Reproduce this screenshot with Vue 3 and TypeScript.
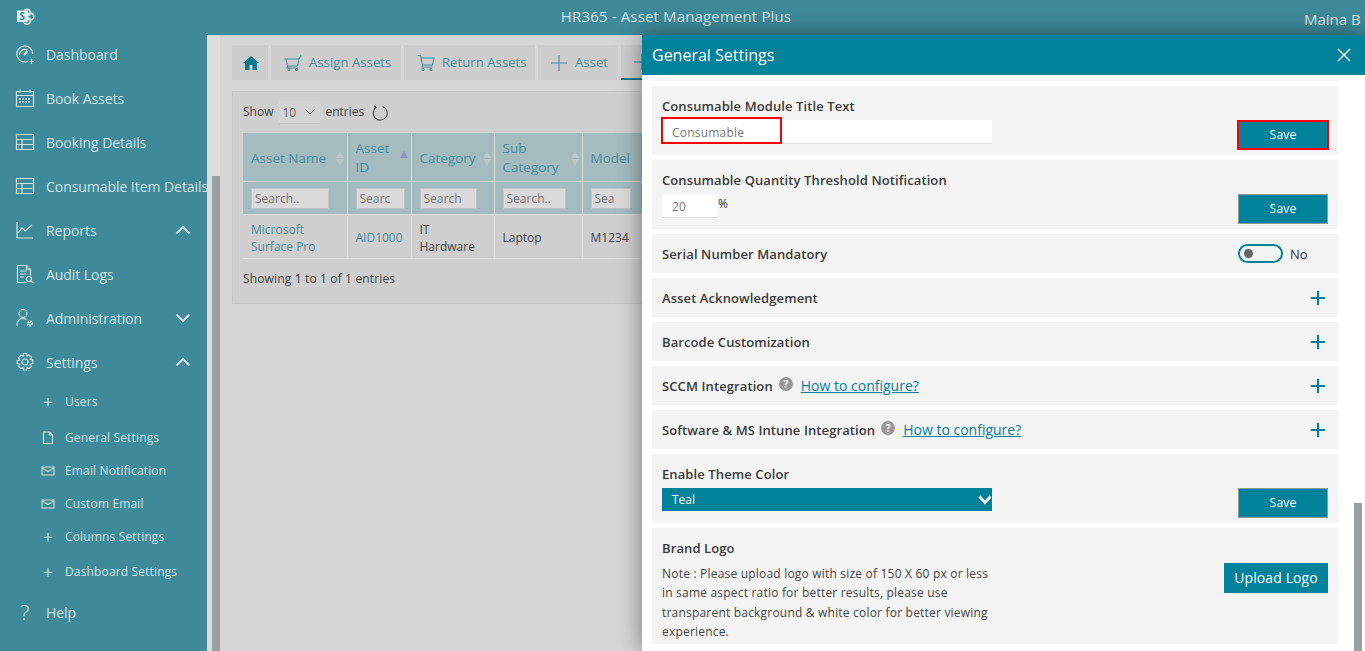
<script setup lang="ts">
interface NavItem {
  label: string
  icon: string
  chevron?: 'up' | 'down'
}

const navTop: NavItem[] = [
  { label: 'Dashboard', icon: 'gauge' },
  { label: 'Book Assets', icon: 'calendar' },
  { label: 'Booking Details', icon: 'table' },
  { label: 'Consumable Item Details', icon: 'table' },
  { label: 'Reports', icon: 'chart', chevron: 'up' },
  { label: 'Audit Logs', icon: 'audit' },
  { label: 'Administration', icon: 'admin', chevron: 'down' },
  { label: 'Settings', icon: 'gear', chevron: 'up' },
]

const navSub = [
  { label: 'Users', icon: 'plus' },
  { label: 'General Settings', icon: 'doc' },
  { label: 'Email Notification', icon: 'mail' },
  { label: 'Custom Email', icon: 'mail' },
  { label: 'Columns Settings', icon: 'plus' },
  { label: 'Dashboard Settings', icon: 'plus' },
]

const columns = [
  { title: 'Asset Name', width: 104, holder: 'Search..', input: 78 },
  { title: 'Asset ID', width: 64, holder: 'Searc', input: 49 },
  { title: 'Category', width: 83, holder: 'Search', input: 57 },
  { title: 'Sub Category', width: 88, holder: 'Search..', input: 63 },
  { title: 'Model', width: 80, holder: 'Sea', input: 40 },
]

const accordions = [
  { label: 'Asset Acknowledgement' },
  { label: 'Barcode Customization' },
  { label: 'SCCM Integration', help: true },
  { label: 'Software & MS Intune Integration', help: true },
]
</script>

<template>
  <div class="page">
    <header class="topbar">
      <svg class="logo" width="18" height="17" viewBox="0 0 18 17">
        <circle cx="10" cy="4.500" r="3.300" fill="none" stroke="#e4eef0" stroke-width="1.400" />
        <circle cx="13.500" cy="8.500" r="3.300" fill="none" stroke="#e4eef0" stroke-width="1.400" />
        <circle cx="10" cy="12.800" r="3.300" fill="none" stroke="#e4eef0" stroke-width="1.400" />
        <rect x="0" y="2.500" width="11" height="11.500" fill="#e4eef0" />
        <text x="2.500" y="12" font-size="10" font-weight="700" fill="#3e8a99">S</text>
      </svg>
      <span class="app-title">HR365 - Asset Management Plus</span>
      <span class="user">Maina B</span>
    </header>

    <div class="body">
      <nav class="sidebar">
        <a v-for="item in navTop" :key="item.label" class="nav-row">
          <svg class="nav-icon" width="20" height="20" viewBox="0 0 20 20" fill="none" stroke="currentColor" stroke-width="1.2">
            <template v-if="item.icon === 'gauge'">
              <path d="M13 17.300A8 8 0 1 1 17.800 10" />
              <path d="M4.500 11a5.500 5.500 0 0 1 8-5" />
              <path d="M9 11l3.500-4" stroke-width="2" />
              <path d="M14 17.500h5M16.500 15v5" />
            </template>
            <template v-else-if="item.icon === 'calendar'">
              <path d="M1.500 3.500h17v15h-17zM1.500 7.500h17M5 1.500v3M15 1.500v3" />
              <path d="M5 10v6M8 10v6M11 10v6M14 10v6" stroke-dasharray="2 1" />
            </template>
            <template v-else-if="item.icon === 'table'">
              <path d="M1.500 2.500h17v15h-17zM1.500 7.500h17M1.500 12.500h17M7 7.500v10" />
            </template>
            <template v-else-if="item.icon === 'chart'">
              <path d="M2 2v16h16M3 13l4-5 3 3 7-6" />
            </template>
            <template v-else-if="item.icon === 'audit'">
              <path d="M2.500 1.500h9l4 4v6M11.500 1.500v4h4M2.500 1.500v17h9" />
              <path d="M5 7h7M5 10h6M5 13h4" />
              <circle cx="14" cy="15" r="2.500" />
              <path d="M16 17l2.500 2" />
            </template>
            <template v-else-if="item.icon === 'admin'">
              <circle cx="8" cy="5.500" r="4" />
              <path d="M2 18c0-5 2.500-7.500 6-7.500 1.500 0 2.500.4 3.500 1" />
              <circle cx="15" cy="15.500" r="2" stroke-width="2.200" stroke-dasharray="1.500 .6" />
            </template>
            <template v-else>
              <circle cx="10" cy="10" r="3" />
              <path d="M8.500 1.500h3l.5 2.500 2-1 2.500 2.300-1.200 2 2.500.8v3.400l-2.500.8 1.200 2-2.500 2.300-2-1-.5 2.400h-3l-.5-2.400-2 1-2.500-2.300 1.200-2-2.500-.8V8.600l2.500-.8-1.200-2L6 3l2 1z" />
            </template>
          </svg>
          <span class="nav-label">{{ item.label }}</span>
          <svg v-if="item.chevron" class="chevron" width="16" height="10" viewBox="0 0 16 10" fill="none" stroke="currentColor" stroke-width="2.200">
            <path :d="item.chevron === 'up' ? 'M1.500 8.500 8 2l6.500 6.500' : 'M1.500 1.500 8 8l6.500-6.500'" />
          </svg>
        </a>

        <div class="sub-list">
          <a v-for="sub in navSub" :key="sub.label" class="sub-row">
            <svg class="sub-icon" width="14" height="14" viewBox="0 0 14 14" fill="none" stroke="currentColor" stroke-width="1.100">
              <path v-if="sub.icon === 'plus'" d="M7 3v8.500M2.800 7.200h8.500" />
              <path v-else-if="sub.icon === 'doc'" d="M2.500 1h6l3 3v8.500h-9zM8.500 1v3h3M9 12.500h3" />
              <path v-else d="M1 3h12v8H1zM1 4l6 3.500L13 4" />
            </svg>
            <span>{{ sub.label }}</span>
          </a>
        </div>

        <a class="nav-row help-row">
          <span class="help-glyph">?</span>
          <span class="nav-label">Help</span>
        </a>
      </nav>

      <div class="scroll-gutter"><div class="scroll-thumb"></div></div>

      <main class="content">
        <div class="tabs">
          <a class="tab home">
            <svg width="16" height="14" viewBox="0 0 16 14"><path d="M8 0 0 7h2v7h4.500V9h3v5H14V7h2z" fill="#14788c" /></svg>
          </a>
          <a class="tab assign">
            <svg width="18" height="16" viewBox="0 0 18 16" fill="none" stroke="currentColor" stroke-width="1.100"><path d="M.5 4h14.500l2-3.500M2 4l1.500 7h10L15 4M3.500 11l-.5 2h11" /><circle cx="5" cy="14.500" r="1" /><circle cx="12.500" cy="14.500" r="1" /></svg>
            Assign Assets
          </a>
          <a class="tab ret">
            <svg width="18" height="16" viewBox="0 0 18 16" fill="none" stroke="currentColor" stroke-width="1.100"><path d="M.5.500h3l2 9.500h10L17 3H4M5.500 10l-.5 2h10.500" /><circle cx="6" cy="14.500" r="1" /><circle cx="14" cy="14.500" r="1" /></svg>
            Return Assets
          </a>
          <a class="tab asset">
            <svg width="16" height="16" viewBox="0 0 16 16" fill="none" stroke="currentColor" stroke-width="1.100"><path d="M8 0v16M0 8h16" /></svg>
            Asset
          </a>
          <a class="tab active">
            <svg width="16" height="16" viewBox="0 0 16 16" fill="none" stroke="currentColor" stroke-width="1.100"><path d="M8 0v16M0 8h16" /></svg>
          </a>
        </div>

        <section class="grid-card">
          <div class="length">
            <span class="length-text">Show</span>
            <span class="length-select">10<svg width="10" height="6" viewBox="0 0 10 6" fill="none" stroke="#8a8a8a"><path d="M.5.500 5 5 9.500.500" /></svg></span>
            <span class="length-text entries">entries</span>
            <svg class="refresh" width="16" height="16" viewBox="0 0 16 16" fill="none" stroke="#444" stroke-width="1.100"><path d="M10.500 1.500A7 7 0 1 1 4 2.500M2.500 .8 4 2.500 2 4" /></svg>
          </div>

          <table class="asset-table">
            <thead>
              <tr class="head-row">
                <th v-for="(col, i) in columns" :key="col.title" :style="{ width: col.width + 'px' }">
                  <div class="th-inner">
                    <span>{{ col.title }}</span>
                    <span class="sort" :class="{ sorted: i === 1 }"><i class="up"></i><i class="down"></i></span>
                  </div>
                </th>
              </tr>
              <tr class="search-row">
                <th v-for="col in columns" :key="col.title + '-s'">
                  <input class="search" :placeholder="col.holder" :style="{ width: col.input + 'px' }" />
                </th>
              </tr>
            </thead>
            <tbody>
              <tr>
                <td class="link">Microsoft<br />Surface Pro</td>
                <td class="link">AID1000</td>
                <td>IT<br />Hardware</td>
                <td>Laptop</td>
                <td>M1234</td>
              </tr>
            </tbody>
          </table>
          <p class="info">Showing 1 to 1 of 1 entries</p>
        </section>
      </main>
    </div>

    <aside class="panel">
      <div class="panel-head">
        <h2>General Settings</h2>
        <svg width="14" height="14" viewBox="0 0 14 14" fill="none" stroke="#fff" stroke-width="1.400"><path d="M1 1l12 12M13 1 1 13" /></svg>
      </div>
      <div class="panel-body">
        <div class="sliver"></div>

        <div class="card form-card">
          <div class="form-left">
            <label>Consumable Module Title Text</label>
            <div class="field-wrap">
              <input class="field wide" value="Consumable" />
              <span class="marker"></span>
            </div>
          </div>
          <button class="btn save flagged">Save</button>
        </div>

        <div class="card form-card">
          <div class="form-left">
            <label>Consumable Quantity Threshold Notification</label>
            <div class="threshold">
              <input class="field short" value="20" />
              <span class="pct">%</span>
            </div>
          </div>
          <button class="btn save">Save</button>
        </div>

        <div class="card line-card">
          <label>Serial Number Mandatory</label>
          <div class="toggle-wrap">
            <span class="toggle"><i></i></span>
            <span>No</span>
          </div>
        </div>

        <div v-for="acc in accordions" :key="acc.label" class="card line-card">
          <div class="acc-left">
            <label>{{ acc.label }}</label>
            <template v-if="acc.help">
              <span class="q">?</span>
              <a class="howto">How to configure?</a>
            </template>
          </div>
          <svg class="expand" width="16" height="16" viewBox="0 0 16 16" fill="none" stroke="#00829a" stroke-width="2.200"><path d="M8 1v14M1 8h14" /></svg>
        </div>

        <div class="card form-card">
          <div class="form-left">
            <label>Enable Theme Color</label>
            <div class="theme-select">
              <span>Teal</span>
              <svg width="14" height="10" viewBox="0 0 14 10" fill="none" stroke="#fff" stroke-width="2.600"><path d="M1.500 1.500 7 7.500l5.500-6" /></svg>
            </div>
          </div>
          <button class="btn save">Save</button>
        </div>

        <div class="card logo-card">
          <div class="logo-left">
            <label>Brand Logo</label>
            <p>Note : Please upload logo with size of 150 X 60 px or less in same aspect ratio for better results, please use transparent background &amp; white color for better viewing experience.</p>
          </div>
          <button class="btn upload">Upload Logo</button>
        </div>
      </div>
      <div class="panel-scroll"></div>
    </aside>
  </div>
</template>

<style>
html,
body {
  margin: 0;
  overflow: hidden;
}
</style>

<style scoped>
.page {
  position: relative;
  width: 1365px;
  height: 651px;
  overflow: hidden;
  font-family: "Open Sans", sans-serif;
  font-size: 13px;
  background: #d6d6d6;
  color: #444;
}

.topbar {
  height: 35px;
  background: #3e8a99;
  color: #d5e3e6;
  position: relative;
  display: flex;
  align-items: center;
  padding-left: 17px;
}

.logo {
  margin-top: -3px;
}

.app-title {
  position: absolute;
  left: 0;
  right: 13px;
  top: 6px;
  text-align: center;
  font-size: 15px;
  line-height: 20px;
  letter-spacing: 0.15px;
}

.user {
  position: absolute;
  left: 1304px;
  top: 9px;
  font-size: 15px;
  line-height: 20px;
  white-space: nowrap;
}

.body {
  display: flex;
  height: 616px;
}

.sidebar {
  width: 207px;
  flex: none;
  background: #3e8a99;
  color: #d2e2e5;
  overflow: hidden;
  box-sizing: border-box;
}

.nav-row {
  display: flex;
  align-items: center;
  height: 44px;
  padding-left: 15px;
  position: relative;
  top: -3px;
  white-space: nowrap;
}

.nav-icon {
  flex: none;
  width: 20px;
}

.nav-label {
  margin-left: 11px;
  font-size: 14px;
  letter-spacing: -0.05px;
}

.chevron {
  position: absolute;
  left: 175px;
  top: 17px;
}

.sub-list {
  margin-top: -2px;
}

.sub-row {
  display: flex;
  align-items: center;
  height: 33px;
  padding-left: 41px;
  font-size: 12px;
  letter-spacing: 0.15px;
  white-space: nowrap;
}

.sub-row:first-child {
  margin-bottom: 3px;
}

.sub-row:last-child {
  margin-top: 2px;
}

.sub-icon {
  margin-right: 10px;
  flex: none;
}

.help-row {
  margin-top: 5px;
}

.help-glyph {
  width: 20px;
  text-align: center;
  font-size: 21px;
  font-weight: 300;
}

.scroll-gutter {
  width: 13px;
  flex: none;
  background: #dcdcdc;
  padding-left: 5px;
  box-sizing: border-box;
}

.scroll-thumb {
  width: 8px;
  height: 475px;
  margin-top: 141px;
  background: #98a0a6;
}

.content {
  flex: 1;
  padding: 10px 0 0 12px;
  overflow: hidden;
}

.tabs {
  display: flex;
  gap: 3px;
  height: 35px;
}

.tab {
  display: flex;
  align-items: center;
  gap: 7px;
  background: #cdcdcd;
  color: #4b8e9d;
  font-size: 13px;
  letter-spacing: 0.1px;
  line-height: 16px;
  padding-left: 13px;
  padding-bottom: 2px;
  box-sizing: border-box;
  white-space: nowrap;
}

.tab svg {
  margin-top: 2px;
}

.home {
  width: 36px;
  padding-left: 11px;
}

.assign {
  width: 130px;
}

.ret {
  width: 131px;
}

.asset {
  width: 80px;
  gap: 8px;
}

.active {
  width: 60px;
  border-bottom: 2px solid #14788c;
}

.grid-card {
  margin-top: 11px;
  width: 600px;
  height: 213px;
  border: 1px solid #c8c8c8;
  background: #cfcfcf;
  padding: 0 0 0 10px;
  box-sizing: border-box;
}

.length {
  display: flex;
  align-items: center;
  height: 41px;
  gap: 6px;
  font-size: 12px;
}

.length-text {
  margin-top: -2px;
}

.entries {
  margin-left: -1px;
}

.length-select {
  width: 41px;
  height: 23px;
  background: #d4d4d4;
  border-bottom: 1px solid #c2c2c2;
  display: flex;
  align-items: center;
  justify-content: space-between;
  box-sizing: border-box;
  padding: 0 5px 0 3px;
  color: #666;
}

.refresh {
  margin-left: 2px;
}

.asset-table {
  border-collapse: collapse;
  table-layout: fixed;
  width: 419px;
}

.head-row th {
  height: 48px;
  background: #a4bbbf;
  color: #4b8e9d;
  font-weight: 400;
  text-align: left;
  font-size: 13.5px;
  line-height: 19px;
  padding: 3px 3px 0 8px;
  box-sizing: border-box;
  border-right: 1px solid #dcdcdc;
  border-bottom: 1px solid #dcdcdc;
}

.th-inner {
  display: flex;
  align-items: center;
  justify-content: space-between;
}

.sort {
  display: flex;
  flex-direction: column;
  gap: 1px;
  flex: none;
}

.sort i {
  display: block;
  width: 0;
  height: 0;
  border-left: 4px solid transparent;
  border-right: 4px solid transparent;
}

.sort .up {
  border-bottom: 7px solid #b9c6c8;
}

.sort .down {
  border-top: 7px solid #b9c6c8;
}

.sorted .up {
  border-bottom-color: #8c93c4;
}

.sorted .down {
  border-top-color: transparent;
}

.search-row th {
  height: 33px;
  background: #a4bbbf;
  text-align: left;
  padding: 2px 0 0 8px;
  box-sizing: border-box;
  border-right: 1px solid #dcdcdc;
  border-bottom: 1px solid #dcdcdc;
}

.search {
  display: block;
  height: 21px;
  box-sizing: border-box;
  border: 1px solid #bcc4c5;
  background: #dadada;
  padding: 0 3px;
  font: 12px "Open Sans", sans-serif;
}

.search::placeholder {
  color: #777;
}

td {
  height: 44px;
  padding: 3px 4px 0 8px;
  box-sizing: border-box;
  font-size: 12px;
  line-height: 17px;
  color: #444;
  border-right: 1px solid #dcdcdc;
  border-bottom: 1px solid #dcdcdc;
}

.link {
  color: #4b8e9d;
}

.info {
  margin: 11px 0 0;
  font-size: 12px;
  letter-spacing: 0.15px;
}

.panel {
  position: absolute;
  left: 642px;
  top: 35px;
  width: 723px;
  height: 616px;
  background: #fff;
  box-shadow: 0 0 22px rgba(0, 0, 0, 0.45);
}

.panel-head {
  height: 40px;
  background: #00829a;
  color: #fff;
  display: flex;
  align-items: center;
  justify-content: space-between;
  padding: 0 14px 0 10px;
}

.panel-head h2 {
  margin: 0;
  font-size: 16px;
  font-weight: 400;
}

.panel-body {
  display: flex;
  flex-direction: column;
  gap: 5px;
  padding: 5px 0 0 10px;
  width: 686px;
}

.sliver {
  height: 1px;
  background: #f4f4f4;
}

.card {
  background: #f4f4f4;
  box-sizing: border-box;
  color: #333;
}

.card label {
  font-size: 13px;
  font-weight: 600;
  letter-spacing: 0.1px;
  color: #3a3a3a;
}

.form-card {
  height: 69px;
  display: flex;
  justify-content: space-between;
  padding: 11px 10px 0;
}

.form-left {
  display: flex;
  flex-direction: column;
}

.form-left label {
  line-height: 18px;
}

.field-wrap {
  position: relative;
  margin-top: 5px;
  width: 330px;
}

.field {
  display: block;
  height: 24px;
  box-sizing: border-box;
  background: #fff;
  border: 0;
  border-bottom: 1px solid #e4e4e4;
  padding: 2px 10px 0;
  font: 12px "Open Sans", sans-serif;
  letter-spacing: 0.2px;
  color: #777;
}

.wide {
  width: 330px;
}

.marker {
  position: absolute;
  left: -1px;
  top: -3px;
  width: 121px;
  height: 27px;
  box-sizing: border-box;
  border: 2px solid #f00;
}

.threshold {
  display: flex;
  margin-top: 5px;
  align-items: flex-start;
}

.short {
  width: 56px;
}

.pct {
  font-size: 12px;
  line-height: 18px;
  margin-top: 1px;
}

.btn {
  background: #00829a;
  color: #fff;
  border: 0;
  font-family: inherit;
  padding: 0 0 2px;
}

.save {
  width: 90px;
  height: 30px;
  margin-top: 23px;
  box-sizing: border-box;
  border: 1px solid #8a9a9e;
  font-size: 12px;
  letter-spacing: 0.2px;
}

.flagged {
  width: 92px;
  margin-right: -1px;
  border: 2px solid #f00;
}

.line-card {
  height: 39px;
  padding: 0 10px;
  display: flex;
  align-items: center;
  justify-content: space-between;
}

.toggle-wrap {
  display: flex;
  align-items: center;
  gap: 7px;
  width: 71px;
  font-size: 13px;
  margin-right: 19px;
}

.toggle {
  width: 45px;
  height: 19px;
  flex: none;
  box-sizing: border-box;
  border: 2px solid #00829a;
  border-radius: 10px;
  display: block;
  position: relative;
}

.toggle i {
  position: absolute;
  left: 4px;
  top: 3px;
  width: 9px;
  height: 9px;
  border-radius: 50%;
  background: #666;
}

.acc-left {
  display: flex;
  align-items: center;
}

.q {
  width: 14px;
  height: 14px;
  flex: none;
  border-radius: 50%;
  background: #999;
  color: #fff;
  font-size: 10px;
  font-weight: 700;
  line-height: 14px;
  text-align: center;
  margin: -4px 8px 0 6px;
}

.howto {
  color: #00829a;
  text-decoration: underline;
  font-size: 14px;
  line-height: 18px;
}

.expand {
  margin-right: 2px;
}

.theme-select {
  margin-top: 5px;
  width: 330px;
  height: 23px;
  background: #00829a;
  color: #fff;
  font-size: 12px;
  display: flex;
  align-items: center;
  justify-content: space-between;
  padding: 0 0 0 10px;
  box-sizing: border-box;
}

.logo-card {
  height: 116px;
  display: flex;
  justify-content: space-between;
  padding: 11px 10px 0;
}

.logo-left {
  width: 330px;
}

.logo-left label {
  line-height: 18px;
  display: block;
}

.logo-left p {
  margin: 7px 0 0;
  font-size: 12px;
  line-height: 19.3px;
  letter-spacing: 0.2px;
  color: #444;
}

.upload {
  width: 104px;
  height: 30px;
  margin-top: 24px;
  font-size: 14px;
  letter-spacing: 0.1px;
}

.panel-scroll {
  position: absolute;
  left: 712px;
  top: 468px;
  width: 8px;
  height: 148px;
  background: #98a0a6;
}
</style>
